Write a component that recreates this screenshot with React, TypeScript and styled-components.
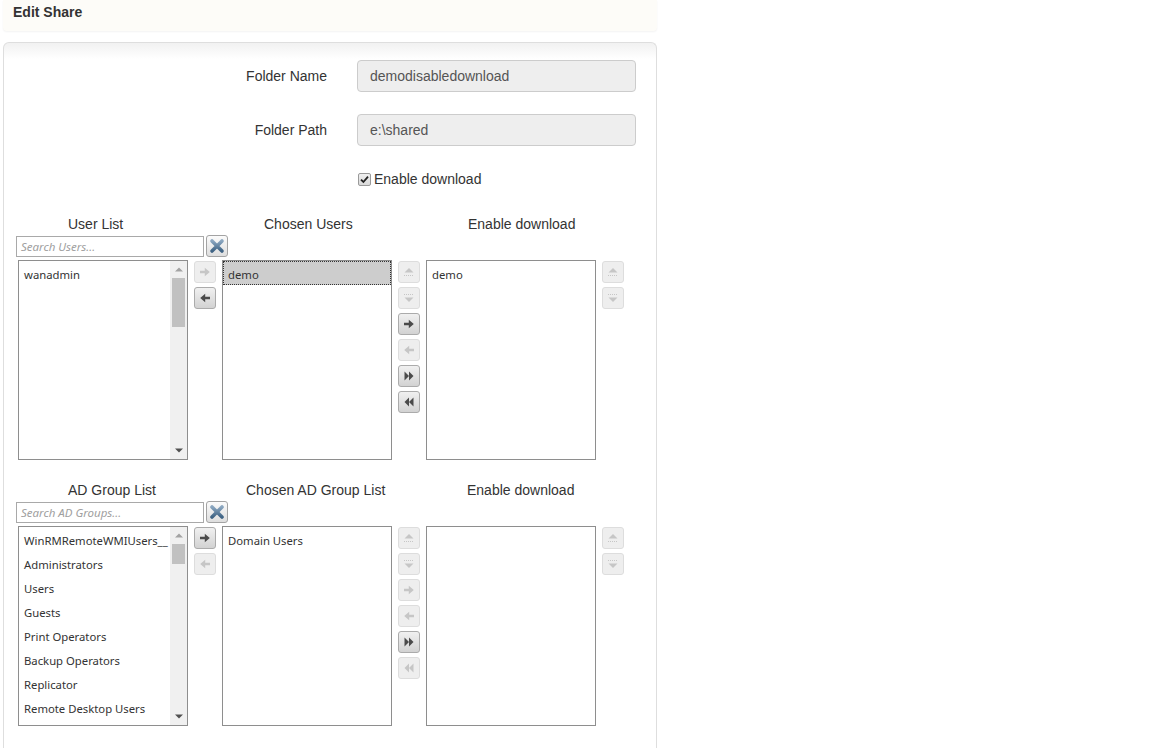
import React from 'react';
import styled, { createGlobalStyle, css } from 'styled-components';

const GlobalStyle = createGlobalStyle`
  html, body { margin: 0; padding: 0; background: #fff; }
  body { font-family: "Liberation Sans", Arial, sans-serif; color: #333; }
`;

const Page = styled.div`
  width: 660px;
`;

const TitleBar = styled.header`
  margin: 0 3px;
  height: 31px;
  box-sizing: border-box;
  padding: 4px 0 0 10px;
  background: #fdfcf8;
  border-radius: 0 0 4px 4px;
  box-shadow: 0 1px 2px rgba(0, 0, 0, 0.05);
`;

const Title = styled.h1`
  margin: 0;
  font-size: 14px;
  line-height: 16px;
  font-weight: bold;
  color: #333;
`;

const Panel = styled.section`
  margin: 11px 3px 0;
  border: 1px solid #dedede;
  border-bottom: none;
  border-radius: 6px 6px 0 0;
  background: linear-gradient(#f1f1f1, #fff 16px);
  padding: 17px 0 30px;
`;

const Form = styled.div`
  display: grid;
  grid-template-columns: 323px 279px;
  column-gap: 30px;
  row-gap: 22px;
  align-items: center;
`;

const Label = styled.label`
  text-align: right;
  font-size: 14px;
  color: #333;
`;

const Field = styled.div`
  height: 32px;
  box-sizing: border-box;
  border: 1px solid #ccc;
  border-radius: 4px;
  background: #eee;
  padding: 0 12px;
  font-size: 14px;
  line-height: 30px;
  color: #555;
`;

const CheckRow = styled.div`
  grid-column: 2;
  margin-top: 2px;
  margin-left: 1px;
  height: 18px;
  display: flex;
  align-items: center;
  gap: 3px;
  font-size: 14px;
  color: #333;
`;

const CheckBox = styled.span`
  width: 13px;
  height: 13px;
  box-sizing: border-box;
  border: 1px solid #9a9a9a;
  border-radius: 2px;
  background: linear-gradient(#f0f0f0, #d9d9d9);
  display: flex;
  align-items: center;
  justify-content: center;
  color: #222;
`;

const ListsSection = styled.div<{ $top: number }>`
  margin-top: ${(p) => p.$top}px;
`;

const HeadingRow = styled.div`
  display: grid;
  grid-template-columns: 204px 204px 204px;
  padding-left: 12px;
`;

const Heading = styled.div<{ $indent: number }>`
  padding-left: ${(p) => p.$indent}px;
  font-size: 14px;
  line-height: 16px;
  color: #333;
  white-space: nowrap;
`;

const SearchRow = styled.div`
  margin-top: 3px;
  padding-left: 12px;
  display: flex;
  gap: 2px;
  align-items: flex-start;
`;

const SearchInput = styled.div`
  margin-top: 1px;
  width: 188px;
  height: 21px;
  box-sizing: border-box;
  border: 1px solid #a9a9a9;
  padding: 0 4px;
  font-family: "Noto Sans", "Open Sans", sans-serif;
  font-style: italic;
  font-size: 11.5px;
  line-height: 19px;
  color: #a0a0a0;
`;

const ClearButton = styled.div`
  width: 22px;
  height: 22px;
  box-sizing: border-box;
  border: 1px solid #a3a3a3;
  border-radius: 3px;
  background: linear-gradient(#fbfbfb, #dedede);
  display: flex;
  align-items: center;
  justify-content: center;
`;

const ListsRow = styled.div`
  margin-top: 3px;
  padding-left: 14px;
  display: flex;
  gap: 6px;
  align-items: flex-start;
`;

const ListBox = styled.div`
  width: 170px;
  height: 200px;
  box-sizing: border-box;
  border: 1px solid #8e8e8e;
  background: #fff;
  display: flex;
`;

const Items = styled.div`
  flex: 1;
  min-width: 0;
  overflow: hidden;
`;

const Item = styled.div<{ $selected?: boolean }>`
  height: 24px;
  box-sizing: border-box;
  padding: 4px 5px 0;
  line-height: 20px;
  font-family: "Noto Sans", "Open Sans", sans-serif;
  font-size: 11.3px;
  color: #333;
  white-space: nowrap;
  overflow: hidden;
  ${(p) =>
    p.$selected &&
    css`
      background: #cdcdcd;
      outline: 1px dotted #333;
      outline-offset: -1px;
    `}
`;

const ScrollBar = styled.div`
  width: 17px;
  background: #f0f0f0;
  display: flex;
  flex-direction: column;
`;

const ScrollArrow = styled.div<{ $dark?: boolean }>`
  height: 17px;
  display: flex;
  align-items: center;
  justify-content: center;
  color: ${(p) => (p.$dark ? '#505050' : '#a3a3a3')};
`;

const ScrollTrack = styled.div`
  flex: 1;
`;

const ScrollThumb = styled.div<{ $offset: number; $size: number }>`
  margin: ${(p) => p.$offset}px 2px 0;
  height: ${(p) => p.$size}px;
  background: #c1c1c1;
`;

const ButtonStack = styled.div`
  width: 22px;
  padding-top: 1px;
  display: flex;
  flex-direction: column;
  gap: 4px;
`;

const IconButton = styled.div<{ $on?: boolean }>`
  width: 22px;
  height: 22px;
  box-sizing: border-box;
  border-radius: 3px;
  display: flex;
  align-items: center;
  justify-content: center;
  ${(p) =>
    p.$on
      ? css`
          border: 1px solid #ababab;
          background: linear-gradient(#f0f0f0, #d2d2d2);
          color: #4a4a4a;
        `
      : css`
          border: 1px solid #dddddd;
          background: #eeeeee;
          color: #c6c6c6;
        `}
`;

type IconKind = 'up' | 'down' | 'right' | 'left' | 'allRight' | 'allLeft';

const Icon = ({ kind }: { kind: IconKind }) => {
  switch (kind) {
    case 'up':
      return (
        <svg width="12" height="12" viewBox="0 0 12 12" fill="currentColor">
          <polygon points="1.5,6.5 6,2 10.5,6.5" />
          <path d="M1 9.5h10" stroke="currentColor" strokeWidth="1" strokeDasharray="1 1" />
        </svg>
      );
    case 'down':
      return (
        <svg width="12" height="12" viewBox="0 0 12 12" fill="currentColor">
          <path d="M1 2.5h10" stroke="currentColor" strokeWidth="1" strokeDasharray="1 1" />
          <polygon points="1.5,5.5 10.5,5.5 6,10" />
        </svg>
      );
    case 'right':
      return (
        <svg width="12" height="12" viewBox="0 0 12 12" fill="currentColor">
          <polygon points="1,4.8 5.8,4.8 5.8,1.8 10.8,6 5.8,10.2 5.8,7.2 1,7.2" />
        </svg>
      );
    case 'left':
      return (
        <svg width="12" height="12" viewBox="0 0 12 12" fill="currentColor">
          <polygon points="11,4.8 6.2,4.8 6.2,1.8 1.2,6 6.2,10.2 6.2,7.2 11,7.2" />
        </svg>
      );
    case 'allRight':
      return (
        <svg width="12" height="12" viewBox="0 0 12 12" fill="currentColor">
          <polygon points="1.5,1.5 6,6 1.5,10.5" />
          <polygon points="6,1.5 10.5,6 6,10.5" />
        </svg>
      );
    case 'allLeft':
      return (
        <svg width="12" height="12" viewBox="0 0 12 12" fill="currentColor">
          <polygon points="6,1.5 1.5,6 6,10.5" />
          <polygon points="10.5,1.5 6,6 10.5,10.5" />
        </svg>
      );
  }
};

const ClearIcon = () => (
  <svg width="16" height="16" viewBox="0 0 16 16">
    <defs>
      <linearGradient id="xgrad" x1="0" y1="0" x2="0" y2="1">
        <stop offset="0" stopColor="#8aa6c0" />
        <stop offset="1" stopColor="#3f6384" />
      </linearGradient>
    </defs>
    <path d="M3 3L13 13M13 3L3 13" stroke="url(#xgrad)" strokeWidth="3.6" strokeLinecap="round" />
  </svg>
);

const TriUp = () => (
  <svg width="8" height="5" viewBox="0 0 8 5" fill="currentColor">
    <polygon points="0,4.5 4,0.5 8,4.5" />
  </svg>
);

const TriDown = () => (
  <svg width="8" height="5" viewBox="0 0 8 5" fill="currentColor">
    <polygon points="0,0.5 8,0.5 4,4.5" />
  </svg>
);

const Scroll = ({ offset, size }: { offset: number; size: number }) => (
  <ScrollBar>
    <ScrollArrow>
      <TriUp />
    </ScrollArrow>
    <ScrollTrack>
      <ScrollThumb $offset={offset} $size={size} />
    </ScrollTrack>
    <ScrollArrow $dark>
      <TriDown />
    </ScrollArrow>
  </ScrollBar>
);

const Buttons = ({ list }: { list: [IconKind, boolean][] }) => (
  <ButtonStack>
    {list.map(([kind, on], i) => (
      <IconButton key={i} $on={on}>
        <Icon kind={kind} />
      </IconButton>
    ))}
  </ButtonStack>
);

type SectionProps = {
  top: number;
  headings: [string, number][];
  placeholder: string;
  source: string[];
  scroll: { offset: number; size: number };
  chosen: string[];
  selected?: string;
  enabled: string[];
  moveButtons: [IconKind, boolean][];
  middleButtons: [IconKind, boolean][];
  orderButtons: [IconKind, boolean][];
};

const PickerSection = (p: SectionProps) => (
  <ListsSection $top={p.top}>
    <HeadingRow>
      {p.headings.map(([text, indent]) => (
        <Heading key={text} $indent={indent}>
          {text}
        </Heading>
      ))}
    </HeadingRow>
    <SearchRow>
      <SearchInput>{p.placeholder}</SearchInput>
      <ClearButton>
        <ClearIcon />
      </ClearButton>
    </SearchRow>
    <ListsRow>
      <ListBox>
        <Items>
          {p.source.map((s) => (
            <Item key={s}>{s}</Item>
          ))}
        </Items>
        <Scroll offset={p.scroll.offset} size={p.scroll.size} />
      </ListBox>
      <Buttons list={p.moveButtons} />
      <ListBox>
        <Items>
          {p.chosen.map((s) => (
            <Item key={s} $selected={s === p.selected}>
              {s}
            </Item>
          ))}
        </Items>
      </ListBox>
      <Buttons list={p.middleButtons} />
      <ListBox>
        <Items>
          {p.enabled.map((s) => (
            <Item key={s}>{s}</Item>
          ))}
        </Items>
      </ListBox>
      <Buttons list={p.orderButtons} />
    </ListsRow>
  </ListsSection>
);

export default function App() {
  return (
    <Page>
      <GlobalStyle />
      <TitleBar>
        <Title>Edit Share</Title>
      </TitleBar>
      <Panel>
        <Form>
          <Label>Folder Name</Label>
          <Field>demodisabledownload</Field>
          <Label>Folder Path</Label>
          <Field>e:\shared</Field>
          <CheckRow>
            <CheckBox>
              <svg width="9" height="9" viewBox="0 0 9 9">
                <path d="M1 4.6L3.4 7L8 1.6" fill="none" stroke="currentColor" strokeWidth="1.8" />
              </svg>
            </CheckBox>
            Enable download
          </CheckRow>
        </Form>

        <PickerSection
          top={28}
          headings={[
            ['User List', 52],
            ['Chosen Users', 44],
            ['Enable download', 44],
          ]}
          placeholder="Search Users..."
          source={['wanadmin']}
          scroll={{ offset: 0, size: 49 }}
          chosen={['demo']}
          selected="demo"
          enabled={['demo']}
          moveButtons={[
            ['right', false],
            ['left', true],
          ]}
          middleButtons={[
            ['up', false],
            ['down', false],
            ['right', true],
            ['left', false],
            ['allRight', true],
            ['allLeft', true],
          ]}
          orderButtons={[
            ['up', false],
            ['down', false],
          ]}
        />

        <PickerSection
          top={22}
          headings={[
            ['AD Group List', 52],
            ['Chosen AD Group List', 26],
            ['Enable download', 43],
          ]}
          placeholder="Search AD Groups..."
          source={[
            'WinRMRemoteWMIUsers__',
            'Administrators',
            'Users',
            'Guests',
            'Print Operators',
            'Backup Operators',
            'Replicator',
            'Remote Desktop Users',
          ]}
          scroll={{ offset: 0, size: 20 }}
          chosen={['Domain Users']}
          enabled={[]}
          moveButtons={[
            ['right', true],
            ['left', false],
          ]}
          middleButtons={[
            ['up', false],
            ['down', false],
            ['right', false],
            ['left', false],
            ['allRight', true],
            ['allLeft', false],
          ]}
          orderButtons={[
            ['up', false],
            ['down', false],
          ]}
        />
      </Panel>
    </Page>
  );
}
